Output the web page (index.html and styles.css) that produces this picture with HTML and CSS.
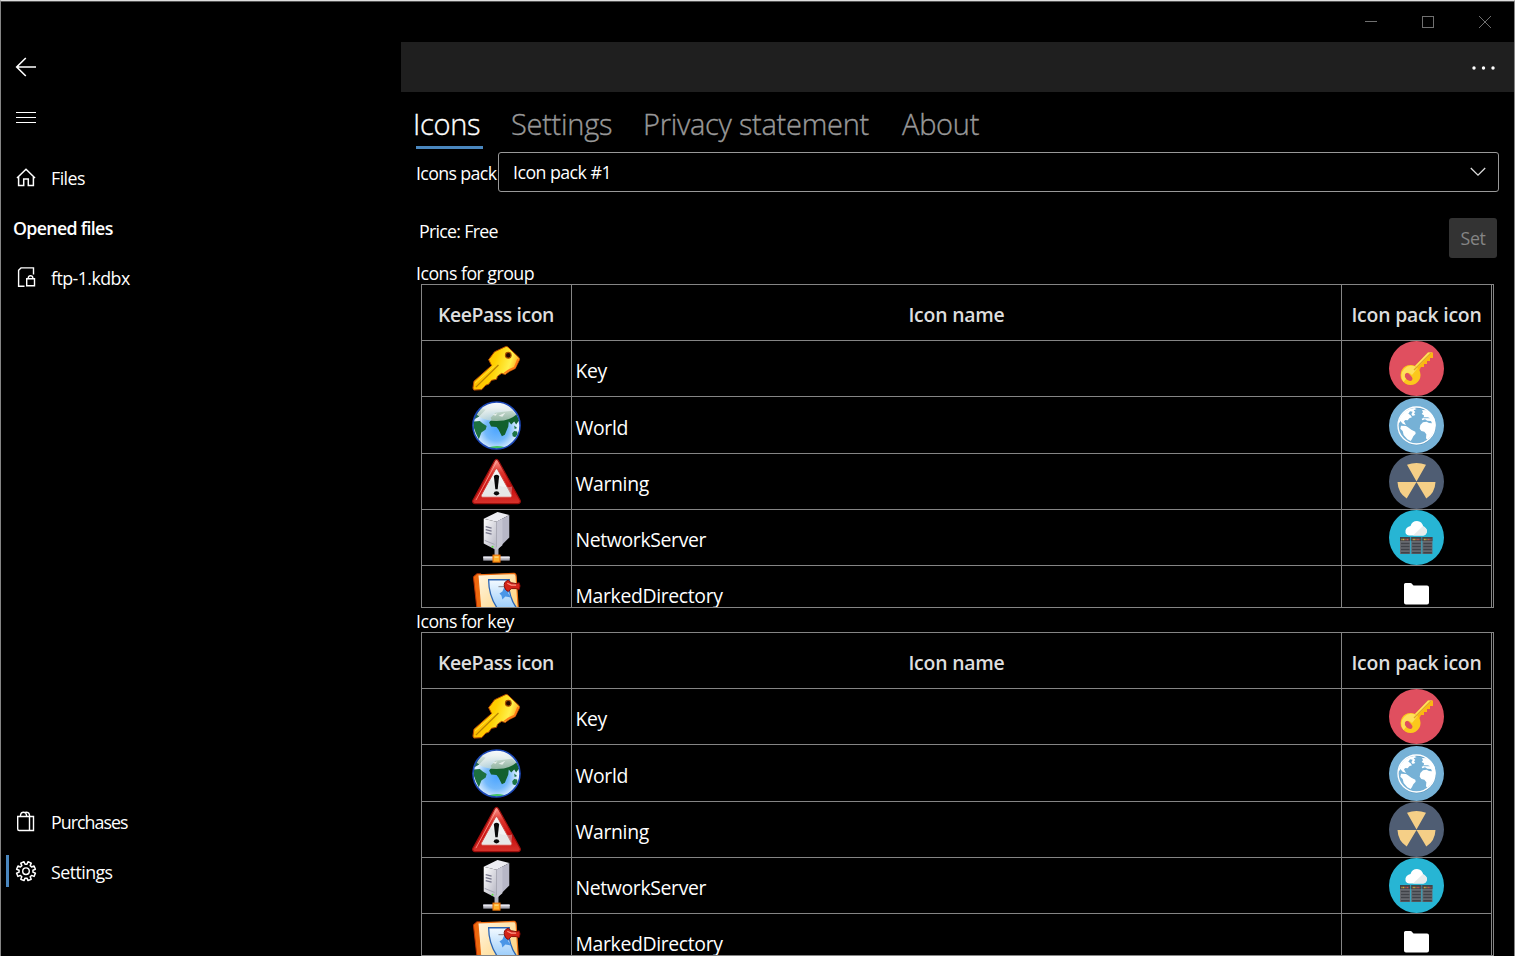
FILE: index.html
```html
<!DOCTYPE html>
<html lang="en">
<head>
<meta charset="utf-8">
<title>Settings</title>
<link rel="stylesheet" href="styles.css">
</head>
<body>
<svg class="defs" aria-hidden="true">
  <defs>
    <linearGradient id="gold" x1="0" y1="0.3" x2="1" y2="0.6"><stop offset="0" stop-color="#ffae00"/><stop offset=".45" stop-color="#ffd000"/><stop offset=".75" stop-color="#fff04a"/><stop offset="1" stop-color="#ff8a10"/></linearGradient>
    <radialGradient id="sea" cx=".5" cy=".58" r=".55"><stop offset="0" stop-color="#4fa6ff"/><stop offset=".45" stop-color="#74b9fb"/><stop offset=".85" stop-color="#e6f3ff"/><stop offset="1" stop-color="#8dbcf0"/></radialGradient>
    <linearGradient id="gloss" x1="0" y1="0" x2="0" y2="1"><stop offset="0" stop-color="#fff" stop-opacity=".97"/><stop offset="1" stop-color="#c3d6cf" stop-opacity=".72"/></linearGradient>
    <linearGradient id="red" x1="0" y1="0" x2="0" y2="1"><stop offset="0" stop-color="#ff9a90"/><stop offset=".3" stop-color="#dd332b"/><stop offset=".65" stop-color="#c90d0d"/><stop offset="1" stop-color="#d6332c"/></linearGradient>
    <linearGradient id="silver" x1="0" y1="0" x2="1" y2="1"><stop offset="0" stop-color="#fff"/><stop offset="1" stop-color="#b4b4c2"/></linearGradient>
    <linearGradient id="cover" x1="0" y1="0" x2="1" y2="1"><stop offset="0" stop-color="#fff6e2"/><stop offset=".5" stop-color="#ffe1a4"/><stop offset="1" stop-color="#ffc869"/></linearGradient>
    <linearGradient id="sheet" x1="0" y1="0" x2="0" y2="1"><stop offset="0" stop-color="#f4faff"/><stop offset="1" stop-color="#92c8fa"/></linearGradient>

    <symbol id="kp-key" viewBox="0 0 56 56">
      <path d="M36.500 6Q38 5 39.500 6L51 17Q52 18.500 51 20L47 28L41 31L37 34L33 33L29 36L28 39L23 40L20 44L17 45L13 49.500L5 50L4 48L5 41L23 25L20 19L26 11Z" fill="url(#gold)" stroke="#b94a00" stroke-width="1"/>
      <path d="M50 18.500L46.500 27L40 30L36 33" fill="none" stroke="#ff7a16" stroke-width="1.800"/>
      <path d="M7 47L30 24.500" stroke="#b98200" stroke-width="1.300"/><path d="M6 43L26 25.500" stroke="#ffe23a" stroke-width="1"/>
      <circle cx="40" cy="14.500" r="2.900" fill="#210800" stroke="#a95000" stroke-width="1.200"/>
    </symbol>
    <symbol id="kp-world" viewBox="0 0 56 56">
      <circle cx="28" cy="28" r="24" fill="url(#sea)"/>
      <path d="M5 24L11 23.500L14 26L18 28.500L17 32L12.600 35L10 42L7 36L4.500 29Z" fill="#1c7040"/>
      <path d="M5 22Q6 15 12 10L17 12L14 15L10 19Z" fill="#246a51"/>
      <path d="M22 20L27 15L35 14L44 13L49 18L51 23L48 27L46 24L43 27L40.500 24L40 29L36.500 37.500L33.500 39L30 32L28 29.500L22.500 29L20.500 25L23 22Z" fill="#12602f"/>
      <path d="M44 36L46 33.500L49 34L49.500 37L47 40L44.500 39ZM46 28L49 30.500L46.500 31.500Z" fill="#1b7444"/>
      <path d="M19 50.500Q28 47.500 36 50L33 51.500H23Z" fill="#43c663"/>
      <path d="M8 17Q14 4 28 4Q42 4 48 17Q41 23.500 28 23.500Q15 23.500 8 17Z" fill="url(#gloss)"/>
      <path d="M24 17L29 15.500L27 18ZM30 18L37 15L34 19Z" fill="#fff" opacity=".7"/>
      <circle cx="28" cy="28" r="24" fill="none" stroke="#1c48b8" stroke-width="1.600"/>
    </symbol>
    <symbol id="kp-warning" viewBox="0 0 56 56">
      <path d="M26 7Q28 4 30 7L52 47Q53 50 50 50.500H6Q3 50 4 47Z" fill="url(#red)" stroke="#9b0e0c" stroke-width="1.200"/>
      <path d="M28 8L7 47" stroke="#ffb4aa" stroke-width="1" opacity=".7"/>
      <path d="M27 15.500Q28 14.500 29 15.500L43.500 42Q44 44 42 44H14Q12 44 12.500 42Z" fill="#f2f3f3" stroke="#d24740"/>
      <path d="M13 43L22 26Q30 36 44 33L43 43Z" fill="#d4d6d8" opacity=".4"/>
      <path d="M25.300 22.500Q28 20 30.700 22.500L29.200 36H26.800Z" fill="#090909"/><ellipse cx="28" cy="40" rx="2.700" ry="2.200" fill="#090909"/>
    </symbol>
    <symbol id="kp-server" viewBox="0 0 56 56">
      <path d="M26 38H30V49H26Z" fill="#b2b3be"/>
      <path d="M15 9L29 2L41 5L28 12Z" fill="#ececf2"/><path d="M15 9L28 12V41L15 34Z" fill="url(#silver)"/><path d="M28 12L41 5V28L28 41Z" fill="#b7b7c7"/><path d="M28 12L34 9V36L28 41Z" fill="#c6c6d3"/>
      <path d="M17 17L23 18.500M17 20L23 21.500M17 23L23 24.500" stroke="#76768c" stroke-width="1.300"/><path d="M16 31L26 35" stroke="#a3a3b2"/><circle cx="24" cy="37.500" r="1" fill="#5be23e"/>
      <path d="M14.500 47H41.500V51.500H14.500Z" fill="#aaaab5"/><path d="M14.500 48.500H41.500" stroke="#e8e8ee" stroke-width="1.500"/>
      <rect x="24.500" y="46" width="7" height="7" fill="#ffb22d" stroke="#ef760a" stroke-width="1.200"/><path d="M26 48H30" stroke="#ffe49a"/>
    </symbol>
    <symbol id="kp-marked" viewBox="0 0 56 56">
      <path d="M4.500 11L8 8H12L14 56H9.500Z" fill="#ee680e" stroke="#b83104"/>
      <path d="M9 9L46 7.500Q48 8 48 11L51 56H13Z" fill="url(#cover)" stroke="#ed6c10" stroke-width="1.200"/>
      <path d="M20 14H41Q39 32 51 46H31Q20 32 20 14Z" fill="url(#sheet)" stroke="#2b65b4" stroke-width="1.300"/>
      <path d="M37 19L41 24L40 28L43 32L37 31L34 34L33 30L31 28L34 26Z" fill="#4b96e7"/>
      <path d="M30 21H39" stroke="#9095a0" stroke-width="1.200"/>
      <path d="M36 21Q35 16 40 14.500L43 17L48 18L51 17Q53 20 51 24L48 23L43 23L40 26Q37 25 36 21Z" fill="#d42318" stroke="#850b06"/>
      <path d="M39 17.500L43 19.500H48" fill="none" stroke="#ff9987" stroke-width="1.200"/>
    </symbol>

    <symbol id="ip-key" viewBox="0 0 55 55">
      <circle cx="27.500" cy="27.500" r="27.500" fill="#e04f5f"/>
      <path d="M25 26L39 11.500H44V17H41V20H38V23H35V26H32L30 30Z" fill="#fbb811"/>
      <path d="M25 26L39 11.500H43L26 29Z" fill="#fee05b"/>
      <path fill-rule="evenodd" d="M21.500 24A10 10 0 1 0 21.600 24ZM17 32Q19 31 22 35Q25 38 22 40Q18 40 16 36Q15 33 17 32Z" fill="#fbc81c"/>
      <path d="M14.500 41A10 10 0 0 1 28.600 27L23 34Q19 30 16 33Q15 36 17 38Z" fill="#fee05b"/>
      <path d="M25 29L42 12" stroke="#e2a927" stroke-width="1.200"/>
    </symbol>
    <symbol id="ip-world" viewBox="0 0 55 55">
      <circle cx="27.500" cy="27.500" r="27.500" fill="#76b1d6"/><circle cx="27.800" cy="28.300" r="18.500" fill="none" stroke="#4c88ae" stroke-width="1" opacity=".6"/><circle cx="27.500" cy="27.500" r="18.500" fill="none" stroke="#fff" stroke-width="1.400"/>
      <path transform="translate(-3 -3) scale(.3333)" d="M37 82L44 64L56 50L72 41L85 39L92 42L83 46L88 51L84 55L88 60L80 63L76 58L80 50L72 49L67 56L73 60L78 67L70 70L65 76L58 75L54 79L57 85L60 90L50 86L43 78L40 84ZM45 92L60 93L66 97L76 104L88 110L89 116L82 124L78 132L74 138L64 133L53 120L50 108L43 101ZM108 45L122 46L136 56L146 72L149 90L145 108L135 124L124 134L120 130L121 118L115 110L106 108L101 101L103 90L111 82L122 80L129 84L138 85L135 78L124 77L117 73L109 76L107 71L113 69L114 61L107 57L111 52ZM121 66L131 67L133 70L122 71Z" fill="#fff"/>
      <path d="M34.500 19.200H39L41 20.200H35Z" fill="#76b1d6"/>
    </symbol>
    <symbol id="ip-warning" viewBox="0 0 55 55">
      <circle cx="27.500" cy="27.500" r="27.500" fill="#4f5d73"/>
      <path d="M27.500 27.500L18 10.800Q27.500 7 37 10.800ZM27.500 28H8.500Q9 39 17.700 44.500ZM27.500 28H46.500Q46 39 37.300 44.500Z" fill="#f5cf87"/>
    </symbol>
    <symbol id="ip-server" viewBox="0 0 55 55">
      <circle cx="27.500" cy="27.500" r="27.500" fill="#27b5d4"/>
      <path d="M20 25.500Q16 25 16.500 20.500Q17 17 21.500 16Q23 11 28 11Q33 11 34.500 17Q38 18 38 21.500Q37 25.500 34 25.500Z" fill="#fff"/><path d="M24 25.500L34 16Q38 18 38 21.500Q37 25.500 34 25.500Z" fill="#e7eced"/>
      <g id="rack"><rect x="11" y="27" width="10.200" height="17" fill="#676a70"/><path d="M11 29H21.200" stroke="#414449" stroke-width="4"/><path d="M12 33.500H20.500M12 36.500H20.500M12 39.500H20.500M12 42.800H20.500" stroke="#404349" stroke-width="1.500"/><path d="M12.500 29.500H16" stroke="#e5bd3b" stroke-width="1.500" stroke-dasharray="1 .6"/><path d="M16.500 29.500H20" stroke="#d85b51" stroke-width="1.500" stroke-dasharray="1 .6"/></g>
      <use href="#rack" x="11.200"/><use href="#rack" x="22.300"/>
    </symbol>
    <symbol id="ip-folder" viewBox="0 0 55 55"><path d="M15 18.500Q15 17 16.500 17H21.500Q23 17 23.500 18.500L24.500 19.500H38Q40 19.500 40 21.500V36.500Q40 38.500 38 38.500H17Q15 38.500 15 36.500Z" fill="#fff"/></symbol>
  </defs>
</svg>

<div class="window">
  <header class="titlebar">
    <svg class="caption" viewBox="0 0 12 12"><path d="M0 5.500H12"/></svg>
    <svg class="caption" viewBox="0 0 12 12"><rect x=".5" y=".5" width="11" height="11"/></svg>
    <svg class="caption" viewBox="0 0 12 12"><path d="M0 0L12 12M12 0L0 12"/></svg>
  </header>
  <div class="body">
    <nav class="sidebar">
      <div class="nav-item"><svg class="icon" viewBox="0 0 22 22"><path d="M10.800 2L1.700 11L10.800 20M1.700 11H21" stroke-width="1.600"/></svg></div>
      <div class="nav-item"><svg class="icon" viewBox="0 0 22 22"><path d="M1 6.500H21M1 11.500H21M1 16.500H21" stroke-width="1"/></svg></div>
      <div class="nav-item first"><svg class="icon" viewBox="0 0 22 22"><path d="M2 11L11 2.200L20 11M3.600 10V18.500H8.700V12H13.300V18.500H18.400V10" stroke-width="1.500"/></svg><span class="label">Files</span></div>
      <div class="nav-heading"><span>Opened files</span></div>
      <div class="nav-item"><svg class="icon" viewBox="0 0 22 22"><path d="M9.500 19.300H3.600V3.300L6 .9H18.500V7.500M11.700 11.800H19.500V18.800H11.700ZM13.300 11.800V10.800Q13.500 8.800 15.500 8.800Q17.700 8.800 17.800 10.800V11.800" stroke-width="1.400"/></svg><span class="label">ftp-1.kdbx</span></div>
      <div class="nav-space"></div>
      <div class="nav-item"><svg class="icon" viewBox="0 0 22 22"><path d="M2.700 5.500H18.500V19.500H4.200Q2.700 19.500 2.700 18ZM14.500 5.500V19.500M5.500 5.500V4Q6 1.200 8.500 1.200Q11 1.200 11.500 4V5.500M10 1.500Q14 .5 14.500 4V5.500" stroke-width="1.400"/></svg><span class="label purchases">Purchases</span></div>
      <div class="nav-item active"><svg class="icon" viewBox="-11 -10.200 22 22"><path d="M6.930 .97L9.390 2L8.050 5.230L5.590 4.210L4.210 5.590L5.230 8.050L2 9.390L.97 6.930H-.97L-2 9.390L-5.230 8.050L-4.210 5.590L-5.590 4.210L-8.050 5.230L-9.390 2L-6.930 .97V-.97L-9.390 -2L-8.050 -5.230L-5.590 -4.210L-4.210 -5.590L-5.230 -8.050L-2 -9.390L-.97 -6.930H.97L2 -9.390L5.230 -8.050L4.210 -5.590L5.590 -4.210L8.050 -5.230L9.390 -2L6.930 -.97Z" stroke-width="1.500" stroke-linejoin="round"/><circle r="3.300" stroke-width="1.400"/></svg><span class="label">Settings</span></div>
    </nav>
    <main class="main">
      <div class="commandbar"><svg class="more" viewBox="0 0 24 4"><circle cx="2" cy="2" r="1.700"/><circle cx="11.500" cy="2" r="1.700"/><circle cx="21" cy="2" r="1.700"/></svg></div>
      <div class="tabs">
        <span class="tab t-icons selected">Icons</span><span class="tab t-settings">Settings</span><span class="tab t-privacy">Privacy statement</span><span class="tab t-about">About</span>
      </div>
      <div class="pack-row">
        <span class="pack-label">Icons pack</span>
        <div class="select"><span>Icon pack #1</span><svg class="chevron" viewBox="0 0 16 10"><path d="M.8 1L8 8.200L15.200 1"/></svg></div>
      </div>
      <div class="price-row"><span class="price">Price: Free</span><button class="set" disabled>Set</button></div>
      <h2 class="caption-text group">Icons for group</h2>
      <div class="table">
        <div class="row head"><div><span class="keepass-head">KeePass icon</span></div><div><span>Icon name</span></div><div><span>Icon pack icon</span></div></div>
        <div class="row"><div><svg><use href="#kp-key"/></svg></div><div><span>Key</span></div><div><svg><use href="#ip-key"/></svg></div></div>
        <div class="row tall"><div><svg><use href="#kp-world"/></svg></div><div><span>World</span></div><div><svg><use href="#ip-world"/></svg></div></div>
        <div class="row"><div><svg><use href="#kp-warning"/></svg></div><div><span>Warning</span></div><div><svg><use href="#ip-warning"/></svg></div></div>
        <div class="row"><div><svg><use href="#kp-server"/></svg></div><div><span>NetworkServer</span></div><div><svg><use href="#ip-server"/></svg></div></div>
        <div class="row"><div><svg><use href="#kp-marked"/></svg></div><div><span>MarkedDirectory</span></div><div><svg><use href="#ip-folder"/></svg></div></div>
      </div>
      <h2 class="caption-text key">Icons for key</h2>
      <div class="table">
        <div class="row head"><div><span class="keepass-head">KeePass icon</span></div><div><span>Icon name</span></div><div><span>Icon pack icon</span></div></div>
        <div class="row"><div><svg><use href="#kp-key"/></svg></div><div><span>Key</span></div><div><svg><use href="#ip-key"/></svg></div></div>
        <div class="row tall"><div><svg><use href="#kp-world"/></svg></div><div><span>World</span></div><div><svg><use href="#ip-world"/></svg></div></div>
        <div class="row"><div><svg><use href="#kp-warning"/></svg></div><div><span>Warning</span></div><div><svg><use href="#ip-warning"/></svg></div></div>
        <div class="row"><div><svg><use href="#kp-server"/></svg></div><div><span>NetworkServer</span></div><div><svg><use href="#ip-server"/></svg></div></div>
        <div class="row"><div><svg><use href="#kp-marked"/></svg></div><div><span>MarkedDirectory</span></div><div><svg><use href="#ip-folder"/></svg></div></div>
      </div>
    </main>
  </div>
</div>
</body>
</html>
```

FILE: styles.css
```css
* { box-sizing: border-box; }
body { margin: 0; background: #000; color: #fff; font-family: "Segoe UI", "Open Sans", "Noto Sans", sans-serif; font-size: 17.8px; overflow: hidden; }
svg { display: block; flex: none; }
span, h2 { white-space: nowrap; }
.defs { position: absolute; width: 0; height: 0; }
.window { width: 1515px; height: 956px; display: flex; flex-direction: column; border-top: 1px solid #dedede; border-left: 1px solid #858585; border-right: 1px solid #858585; overflow: hidden; }
.titlebar { height: 41px; flex: none; border-top: 1px solid #555; display: flex; justify-content: flex-end; align-items: flex-start; gap: 45px; padding: 14px 23px 0 0; }
.caption { width: 12px; height: 12px; fill: none; stroke: #707070; stroke-width: 1; }
.body { display: flex; flex: 1; min-height: 0; }

.sidebar { width: 400px; flex: none; display: flex; flex-direction: column; padding-bottom: 59px; }
.nav-item { height: 50px; flex: none; display: flex; align-items: center; padding-left: 14px; }
.nav-item.first { margin-top: 11px; }
.icon { width: 22px; height: 22px; fill: none; stroke: #fff; }
.label { margin-left: 14px; line-height: 24px; letter-spacing: -.55px; padding-bottom: 1px; }
.purchases { letter-spacing: -.95px; }
.nav-heading { height: 50px; padding: 13px 0 0 12px; line-height: 24px; font-weight: 600; letter-spacing: -.68px; }
.nav-space { flex: 1; }
.active { border-left: 3px solid transparent; margin-left: 5px; padding-left: 6px; border-image: linear-gradient(transparent 18%, #4a87bf 18% 78%, transparent 78%) 1; }

.main { flex: 1; min-width: 0; display: flex; flex-direction: column; }
.commandbar { height: 50px; flex: none; background: #1f1f1f; display: flex; align-items: center; justify-content: flex-end; padding: 2px 18px 0 0; }
.more { width: 24px; height: 4px; fill: #fff; }
.tabs { height: 60px; flex: none; display: flex; padding: 10px 0 0 15px; font-size: 29px; line-height: 43px; font-weight: 300; color: #999; -webkit-text-stroke: .35px currentColor; }
.tab { height: 47px; flex: none; letter-spacing: -.28px; }
.t-icons { width: 67px; margin-right: 28px; text-indent: -3px; }
.t-settings { width: 132px; }
.t-privacy { width: 259px; }
.selected { color: #fff; background: linear-gradient(#4a87bf, #4a87bf) 0 100% / 100% 3px no-repeat; }
.pack-row { height: 40px; flex: none; display: flex; padding: 0 15px 0 15px; }
.pack-label { width: 82px; line-height: 43px; letter-spacing: -.64px; }
.select { flex: 1; border: 1px solid #999; border-radius: 3px; display: flex; align-items: center; justify-content: space-between; padding: 0 12px 0 14px; letter-spacing: -.55px; }
.chevron { width: 16px; height: 10px; fill: none; stroke: #ddd; stroke-width: 1.300; }
.price-row { height: 72px; flex: none; display: flex; justify-content: space-between; padding: 26px 17px 0 18px; }
.price { line-height: 27px; letter-spacing: -.72px; }
.set { width: 48px; height: 40px; border: 0; border-radius: 3px; background: #333; color: #858585; font: inherit; letter-spacing: -.4px; padding: 0 0 0; }
.caption-text { margin: 0; padding-left: 15px; flex: none; font-size: inherit; font-weight: 400; letter-spacing: -.54px; }
.group { height: 20px; line-height: 19px; }
.key { height: 24px; line-height: 27px; }

.table { width: 1073px; height: 324px; flex: none; margin-left: 20px; border: 1px solid #858585; overflow: hidden; }
.row { display: grid; grid-template-columns: 150px 770px 150px; height: 56px; font-size: 19.4px; }
.row.tall { height: 57px; }
.row > div { border-right: 1px solid #858585; border-bottom: 1px solid #858585; display: flex; align-items: flex-end; overflow: hidden; letter-spacing: -.35px; }
.row > div:nth-child(odd) { justify-content: center; }
.row > div:nth-child(2) { padding-left: 3.500px; }
.row span { line-height: 28px; margin-bottom: 11px; }
.row svg { width: 55px; height: 55px; }
.row.head > div { justify-content: center; font-weight: 600; color: #dedede; letter-spacing: -.2px; padding: 0; }
.keepass-head { letter-spacing: -.42px; padding-right: 1px; }
```
